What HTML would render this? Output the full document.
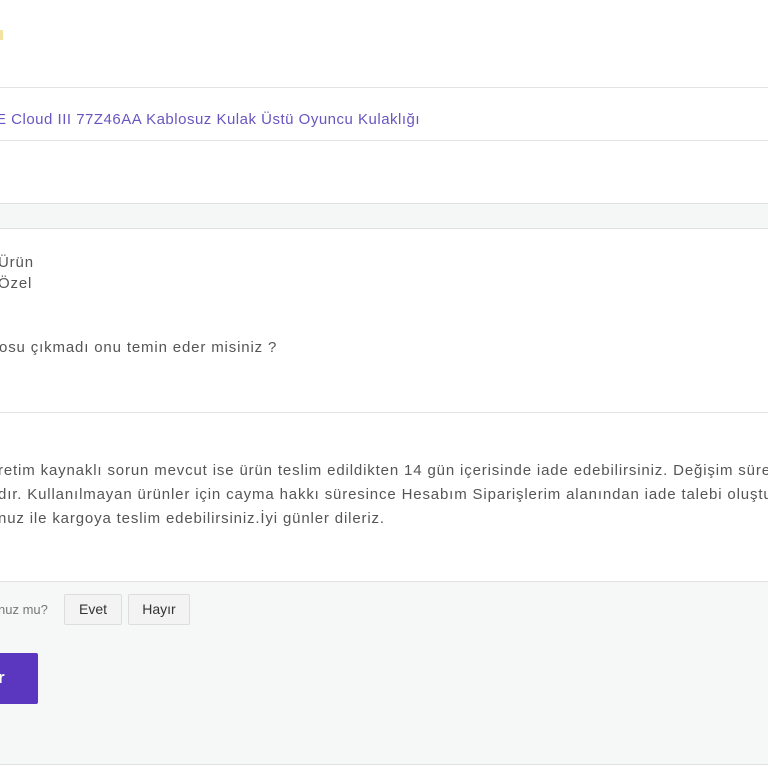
<!DOCTYPE html>
<html><head><meta charset="utf-8"><style>
html,body{margin:0;padding:0;width:768px;height:768px;overflow:hidden;background:#fff;font-family:"Liberation Sans",sans-serif;}
.a{position:absolute;left:0;white-space:nowrap;}
.t{font-size:15px;color:#555;letter-spacing:0.85px}
.line{position:absolute;left:0;width:768px;height:1px;background:#e3e3e3}
</style></head><body>
<div class="a" style="top:30px;left:0;width:3px;height:10px;background:#f3e3a0"></div>
<div class="line" style="top:87px"></div>
<div class="a t" style="top:111px;left:-4px;color:#6a55c0;font-size:15px;letter-spacing:0.5px">E Cloud III 77Z46AA Kablosuz Kulak Üstü Oyuncu Kulaklığı</div>
<div class="line" style="top:140px"></div>
<div class="a" style="top:203px;width:768px;height:24px;background:#f5f6f6;border-top:1px solid #e0e0e0;border-bottom:1px solid #e0e0e0"></div>
<div class="a t" style="top:254px;left:-2px">Ürün</div>
<div class="a t" style="top:275px;left:-2px">Özel</div>
<div class="a t" style="top:339px;left:-1px">osu çıkmadı onu temin eder misiniz ?</div>
<div class="line" style="top:412px"></div>
<div class="a t" style="top:462px;left:-2px">retim kaynaklı sorun mevcut ise ürün teslim edildikten 14 gün içerisinde iade edebilirsiniz. Değişim süre</div>
<div class="a t" style="top:486px;left:-2px">dır. Kullanılmayan ürünler için cayma hakkı süresince Hesabım Siparişlerim alanından iade talebi oluştur</div>
<div class="a t" style="top:510px;left:-2px">nuz ile kargoya teslim edebilirsiniz.İyi günler dileriz.</div>
<div class="a" style="top:581px;width:768px;height:182px;background:#f6f7f7;border-top:1px solid #e2e2e2;border-bottom:1px solid #e2e2e2"></div>
<div class="a" style="top:602px;left:-2px;font-size:13px;color:#777">nuz mu?</div>
<div class="a" style="top:594px;left:64px;width:56px;height:29px;border:1px solid #ddd;background:#f3f3f3;border-radius:2px;font-size:14px;color:#333;text-align:center;line-height:28px">Evet</div>
<div class="a" style="top:594px;left:128px;width:60px;height:29px;border:1px solid #ddd;background:#f3f3f3;border-radius:2px;font-size:14px;color:#333;text-align:center;line-height:28px">Hayır</div>
<div class="a" style="top:653px;left:0;width:38px;height:51px;background:#5b37bf;border-radius:0 2px 2px 0;color:#fff;font-weight:bold;font-size:17px;line-height:50px;text-indent:-2px">r</div>
</body></html>
